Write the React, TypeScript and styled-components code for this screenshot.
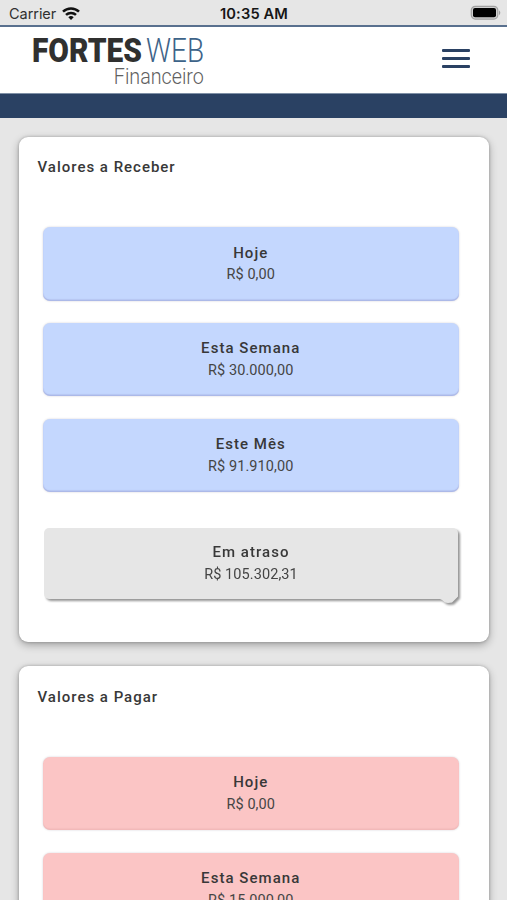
import React from "react";
import styled, { createGlobalStyle } from "styled-components";

const GlobalStyle = createGlobalStyle`
  * { box-sizing: border-box; }
  html, body { margin: 0; padding: 0; }
  body { background: #e6e6e6; font-family: Roboto, sans-serif; color: #383838; }
`;

const Screen = styled.div`
  width: 507px;
  height: 900px;
  overflow: hidden;
  background: #e6e6e6;
`;

const StatusBar = styled.div`
  display: grid;
  grid-template-columns: 1fr auto 1fr;
  align-items: center;
  height: 25px;
  padding: 3px 5px 0 9px;
  font: 400 15px/20px Inter, sans-serif;
  color: #303030;
`;

const Carrier = styled.div`
  display: flex;
  align-items: center;
  gap: 5px;
  font-size: 14.5px;
`;

const CarrierName = styled.span`
  display: block;
  width: 48px;
  letter-spacing: -0.05px;
`;

const Clock = styled.div`
  font-weight: 600;
  font-size: 14.7px;
  letter-spacing: 0.12px;
  color: #161616;
  padding-right: 3px;
`;

const Battery = styled.svg`
  justify-self: end;
  display: block;
  margin-top: -3px;
`;

const Header = styled.header`
  display: flex;
  justify-content: space-between;
  height: 69px;
  padding: 3px 37px 0 28px;
  background: #fff;
  border-top: 2px solid #59708e;
  border-bottom: 1px solid #7f90a6;
`;

const LogoMark = styled.svg`
  display: block;
  overflow: visible;
`;

const MenuButton = styled.button`
  display: flex;
  flex-direction: column;
  gap: 5px;
  width: 28px;
  height: 19px;
  margin-top: 19px;
  padding: 0;
  border: 0;
  background: none;
`;

const MenuLine = styled.span`
  display: block;
  width: 28px;
  height: 3px;
  flex: none;
  border-radius: 1px;
  background: #2a4163;
`;

const Band = styled.div`
  height: 24px;
  background: #2a4163;
`;

const Main = styled.main`
  display: flex;
  flex-direction: column;
  gap: 24.5px;
  padding: 18.6px 18px 0 19px;
`;

const Card = styled.section`
  height: 505px;
  flex: none;
  padding: 20.6px 30px 0 23.5px;
  background: #fff;
  border-radius: 9px;
  box-shadow: 0 3px 9px rgba(0, 0, 0, 0.3), 0 0 3px rgba(0, 0, 0, 0.25);
`;

const CardTitle = styled.h2`
  margin: 0 0 50.3px -5px;
  font-size: 15px;
  line-height: 20px;
  font-weight: 500;
  letter-spacing: 0.99px;
`;

const Tiles = styled.div`
  display: flex;
  flex-direction: column;
  gap: 22.6px;
`;

const Tile = styled.div<{ $tone: "in" | "out" }>`
  height: 73.2px;
  padding-top: 14.2px;
  text-align: center;
  border-radius: 7px;
  background: ${(p) => (p.$tone === "in" ? "#c4d7fe" : "#fbc5c5")};
  box-shadow: inset 0 -1.5px 1px ${(p) => (p.$tone === "in" ? "rgba(125,125,190,.35)" : "rgba(190,125,125,.16)")},
    0 0 2px rgba(70, 60, 80, 0.25);
`;

const LateTile = styled.div`
  position: relative;
  height: 71.6px;
  margin: 13px 1px 0 1.5px;
  padding-top: 13px;
  text-align: center;
  border-radius: 5px;
  background: #e6e6e6;
  filter: drop-shadow(2px 2px 1px rgba(0, 0, 0, 0.42));

  &::after {
    content: "";
    position: absolute;
    right: 0;
    bottom: -3.5px;
    width: 18px;
    height: 9px;
    background: #e6e6e6;
    clip-path: polygon(0 5px, 2px 6px, 5px 8.5px, 8px 9px, 12px 8.5px, 18px 2.5px, 18px 0, 0 0);
  }
`;

const TileLabel = styled.div`
  font-size: 15px;
  line-height: 22px;
  font-weight: 500;
  letter-spacing: 1.05px;
`;

const TileValue = styled.div`
  font-size: 14.5px;
  line-height: 22px;
  padding-top: 0.8px;
  letter-spacing: 0.08px;
  color: #454545;
`;

const Logo = () => (
  <LogoMark width="180" height="62" viewBox="28 30 180 62" role="img" aria-label="Fortes Web Financeiro">
    <text x="32" y="61.5" fontFamily="Roboto" fontWeight="900" fontSize="32.5" fill="#30302f" textLength="110" lengthAdjust="spacingAndGlyphs">FORTES</text>
    <text x="146" y="61.5" fontFamily="Roboto" fontWeight="300" fontSize="32.5" fill="#3d6389" textLength="58" lengthAdjust="spacingAndGlyphs">WEB</text>
    <text x="113.8" y="83.5" fontFamily="Roboto" fontWeight="300" fontSize="21.5" fill="#606060" textLength="90" lengthAdjust="spacingAndGlyphs">Financeiro</text>
  </LogoMark>
);

const Wifi = () => (
  <svg width="18" height="14" viewBox="0 0 18 14" fill="none" stroke="#111" strokeWidth="2.5">
    <path d="M1 4.6C5.4 0.3 12.6 0.3 17 4.6" />
    <path d="M4 7.9C6.8 5.2 11.2 5.2 14 7.9" />
    <path d="M6.3 10.2Q9 7.8 11.7 10.2L9 13Z" fill="#111" stroke="none" />
  </svg>
);

interface Entry {
  label: string;
  value: string;
}

const receivable: Entry[] = [
  { label: "Hoje", value: "R$ 0,00" },
  { label: "Esta Semana", value: "R$ 30.000,00" },
  { label: "Este Mês", value: "R$ 91.910,00" },
];

const payable: Entry[] = [
  { label: "Hoje", value: "R$ 0,00" },
  { label: "Esta Semana", value: "R$ 15.000,00" },
];

interface SummaryProps {
  title: string;
  tone: "in" | "out";
  entries: Entry[];
  late?: Entry;
}

const Summary = ({ title, tone, entries, late }: SummaryProps) => (
  <Card>
    <CardTitle>{title}</CardTitle>
    <Tiles>
      {entries.map((e) => (
        <Tile key={e.label} $tone={tone}>
          <TileLabel>{e.label}</TileLabel>
          <TileValue>{e.value}</TileValue>
        </Tile>
      ))}
      {late && (
        <LateTile>
          <TileLabel>{late.label}</TileLabel>
          <TileValue>{late.value}</TileValue>
        </LateTile>
      )}
    </Tiles>
  </Card>
);

export default function App() {
  return (
    <Screen>
      <GlobalStyle />
      <StatusBar>
        <Carrier>
          <CarrierName>Carrier</CarrierName>
          <Wifi />
        </Carrier>
        <Clock>10:35 AM</Clock>
        <Battery width="32" height="15" viewBox="0 0 32 15">
          <rect x="1.3" y="1.3" width="26.5" height="12.8" rx="4" fill="#d0d0d0" stroke="#a0a0a0" strokeWidth="1.2" />
          <rect x="3" y="3" width="23" height="9.3" rx="2" fill="#000" />
          <path d="M29 5.2Q31.6 7.7 29 10.2Z" fill="#a0a0a0" />
        </Battery>
      </StatusBar>
      <Header>
        <Logo />
        <MenuButton aria-label="Menu">
          <MenuLine />
          <MenuLine />
          <MenuLine />
        </MenuButton>
      </Header>
      <Band />
      <Main>
        <Summary title="Valores a Receber" tone="in" entries={receivable} late={{ label: "Em atraso", value: "R$ 105.302,31" }} />
        <Summary title="Valores a Pagar" tone="out" entries={payable} />
      </Main>
    </Screen>
  );
}
